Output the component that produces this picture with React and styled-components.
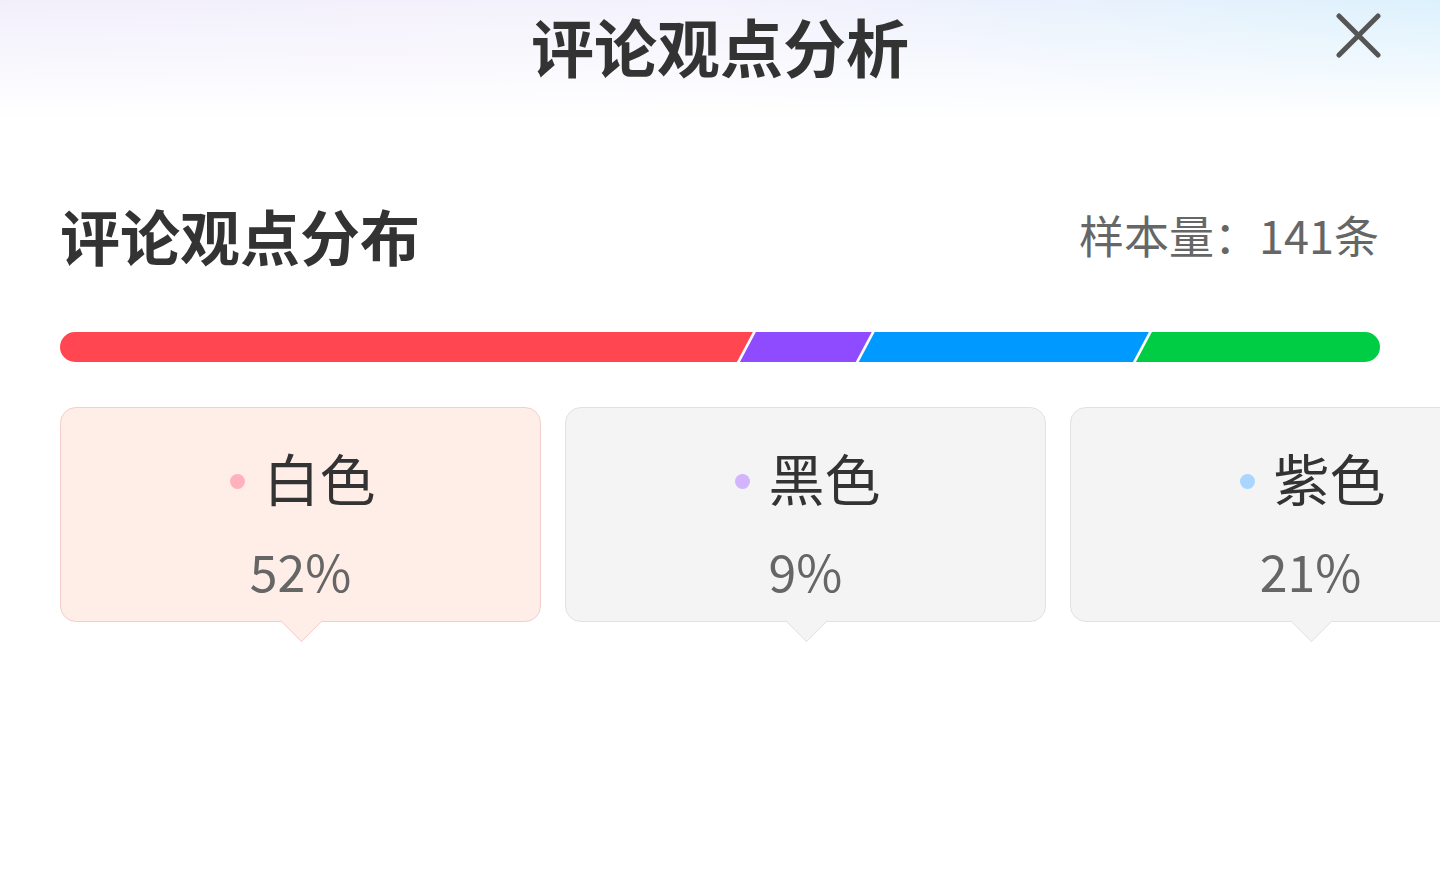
import styled, { createGlobalStyle } from 'styled-components'

const GlobalStyle = createGlobalStyle`
  html, body {
    margin: 0;
    padding: 0;
    background: #fff;
  }
  body {
    font-family: "Noto Sans CJK SC", "Noto Sans", sans-serif;
    width: 1440px;
    height: 888px;
    overflow: hidden;
  }
`

const segments = [
  { name: '白色', value: 52, bar: '#FF4651', dot: '#FFB1BC' },
  { name: '黑色', value: 9, bar: '#8E4BFF', dot: '#D3B4FF' },
  { name: '紫色', value: 21, bar: '#0099FF', dot: '#A9D5FF' },
  { name: '其他', value: 18, bar: '#00CC44', dot: '#9FE8B6' },
]

const BAR_W = 1320
const BAR_H = 30
const SLANT = 8

const DistributionBar = () => {
  let x = 0
  const shapes = segments.map((s, i) => {
    const w = (BAR_W * s.value) / 100
    const x0 = x
    const x1 = x + w
    x = x1
    const l0 = i === 0 ? -20 : x0 + SLANT + 1.5
    const l1 = i === 0 ? -20 : x0 - SLANT + 1.5
    const r0 = i === segments.length - 1 ? BAR_W + 20 : x1 + SLANT - 1.5
    const r1 = i === segments.length - 1 ? BAR_W + 20 : x1 - SLANT - 1.5
    return (
      <polygon
        key={s.name}
        points={`${l0},0 ${r0},0 ${r1},${BAR_H} ${l1},${BAR_H}`}
        fill={s.bar}
      />
    )
  })
  return (
    <BarSvg width={BAR_W} height={BAR_H} viewBox={`0 0 ${BAR_W} ${BAR_H}`}>
      <defs>
        <clipPath id="barClip">
          <rect x="0" y="0" width={BAR_W} height={BAR_H} rx={BAR_H / 2} />
        </clipPath>
      </defs>
      <g clipPath="url(#barClip)">{shapes}</g>
    </BarSvg>
  )
}

const App = () => {
  return (
    <Page>
      <GlobalStyle />
      <Header>
        <Title>评论观点分析</Title>
        <CloseButton aria-label="close">
          <svg width="46" height="46" viewBox="0 0 46 46">
            <path d="M3 3 L42 42 M42 3 L3 42" stroke="#555" strokeWidth="5" strokeLinecap="round" fill="none" />
          </svg>
        </CloseButton>
      </Header>
      <Content>
        <SectionHead>
          <SectionTitle>评论观点分布</SectionTitle>
          <SampleCount>样本量：141条</SampleCount>
        </SectionHead>
        <DistributionBar />
        <CardRow>
          {segments.map((s, i) => (
            <Card key={s.name} active={i === 0}>
              <CardLabel>
                <Dot color={s.dot} />
                {s.name}
              </CardLabel>
              <CardValue>{s.value}%</CardValue>
            </Card>
          ))}
        </CardRow>
      </Content>
    </Page>
  )
}

const Page = styled.div`
  width: 1440px;
  height: 888px;
  background: #fff;
  overflow: hidden;
`

const Header = styled.div`
  position: relative;
  height: 120px;
  display: flex;
  justify-content: center;
  background:
    linear-gradient(180deg, rgba(255, 255, 255, 0) 0%, #fff 100%),
    linear-gradient(90deg, #F2EFFB 0%, #F4F2FC 50%, #DDF1FD 100%);
`

const Title = styled.h1`
  margin: 0;
  padding-top: 5px;
  height: 80px;
  font-size: 63px;
  line-height: 80px;
  font-weight: 700;
  color: #333;
`

const CloseButton = styled.div`
  position: absolute;
  top: 13px;
  right: 58px;
  width: 46px;
  height: 46px;
  display: flex;
`

const Content = styled.div`
  padding: 83px 0 0 60px;
  display: flex;
  flex-direction: column;
`

const SectionHead = styled.div`
  width: 1320px;
  height: 64px;
  display: flex;
  align-items: center;
  justify-content: space-between;
`

const SectionTitle = styled.h2`
  margin: 0;
  font-size: 60px;
  font-weight: 700;
  color: #333;
  line-height: 64px;
`

const SampleCount = styled.div`
  font-size: 45px;
  color: #666;
  line-height: 64px;
  margin-right: 1px;
`

const BarSvg = styled.svg`
  display: block;
  margin-top: 65px;
`

const CardRow = styled.div`
  margin-top: 45px;
  display: flex;
  gap: 24px;
`

const Card = styled.div`
  position: relative;
  flex: 0 0 481px;
  height: 215px;
  box-sizing: border-box;
  border-radius: 16px;
  border: 1px solid ${(p) => (p.active ? '#F3CFCB' : '#E2E2E2')};
  background: ${(p) => (p.active ? '#FFEDE8' : '#F4F4F4')};
  display: flex;
  flex-direction: column;
  align-items: center;
  padding-top: 33px;

  &::after {
    content: '';
    position: absolute;
    left: 50%;
    bottom: -15px;
    width: 30px;
    height: 30px;
    margin-left: -15px;
    transform: rotate(45deg);
    background: ${(p) => (p.active ? '#FFEDE8' : '#F4F4F4')};
    border-right: 1px solid ${(p) => (p.active ? '#F3CFCB' : '#E2E2E2')};
    border-bottom: 1px solid ${(p) => (p.active ? '#F3CFCB' : '#E2E2E2')};
    clip-path: polygon(100% 0, 100% 100%, 0 100%);
  }
`

const CardLabel = styled.div`
  display: flex;
  align-items: center;
  gap: 19px;
  font-size: 56px;
  line-height: 72px;
  color: #333;
  margin-left: 4px;
`

const Dot = styled.span`
  width: 15px;
  height: 15px;
  margin-top: 8px;
  border-radius: 50%;
  background: ${(p) => p.color};
`

const CardValue = styled.div`
  margin-top: 25px;
  font-size: 50px;
  line-height: 64px;
  color: #666;
`

export default App
